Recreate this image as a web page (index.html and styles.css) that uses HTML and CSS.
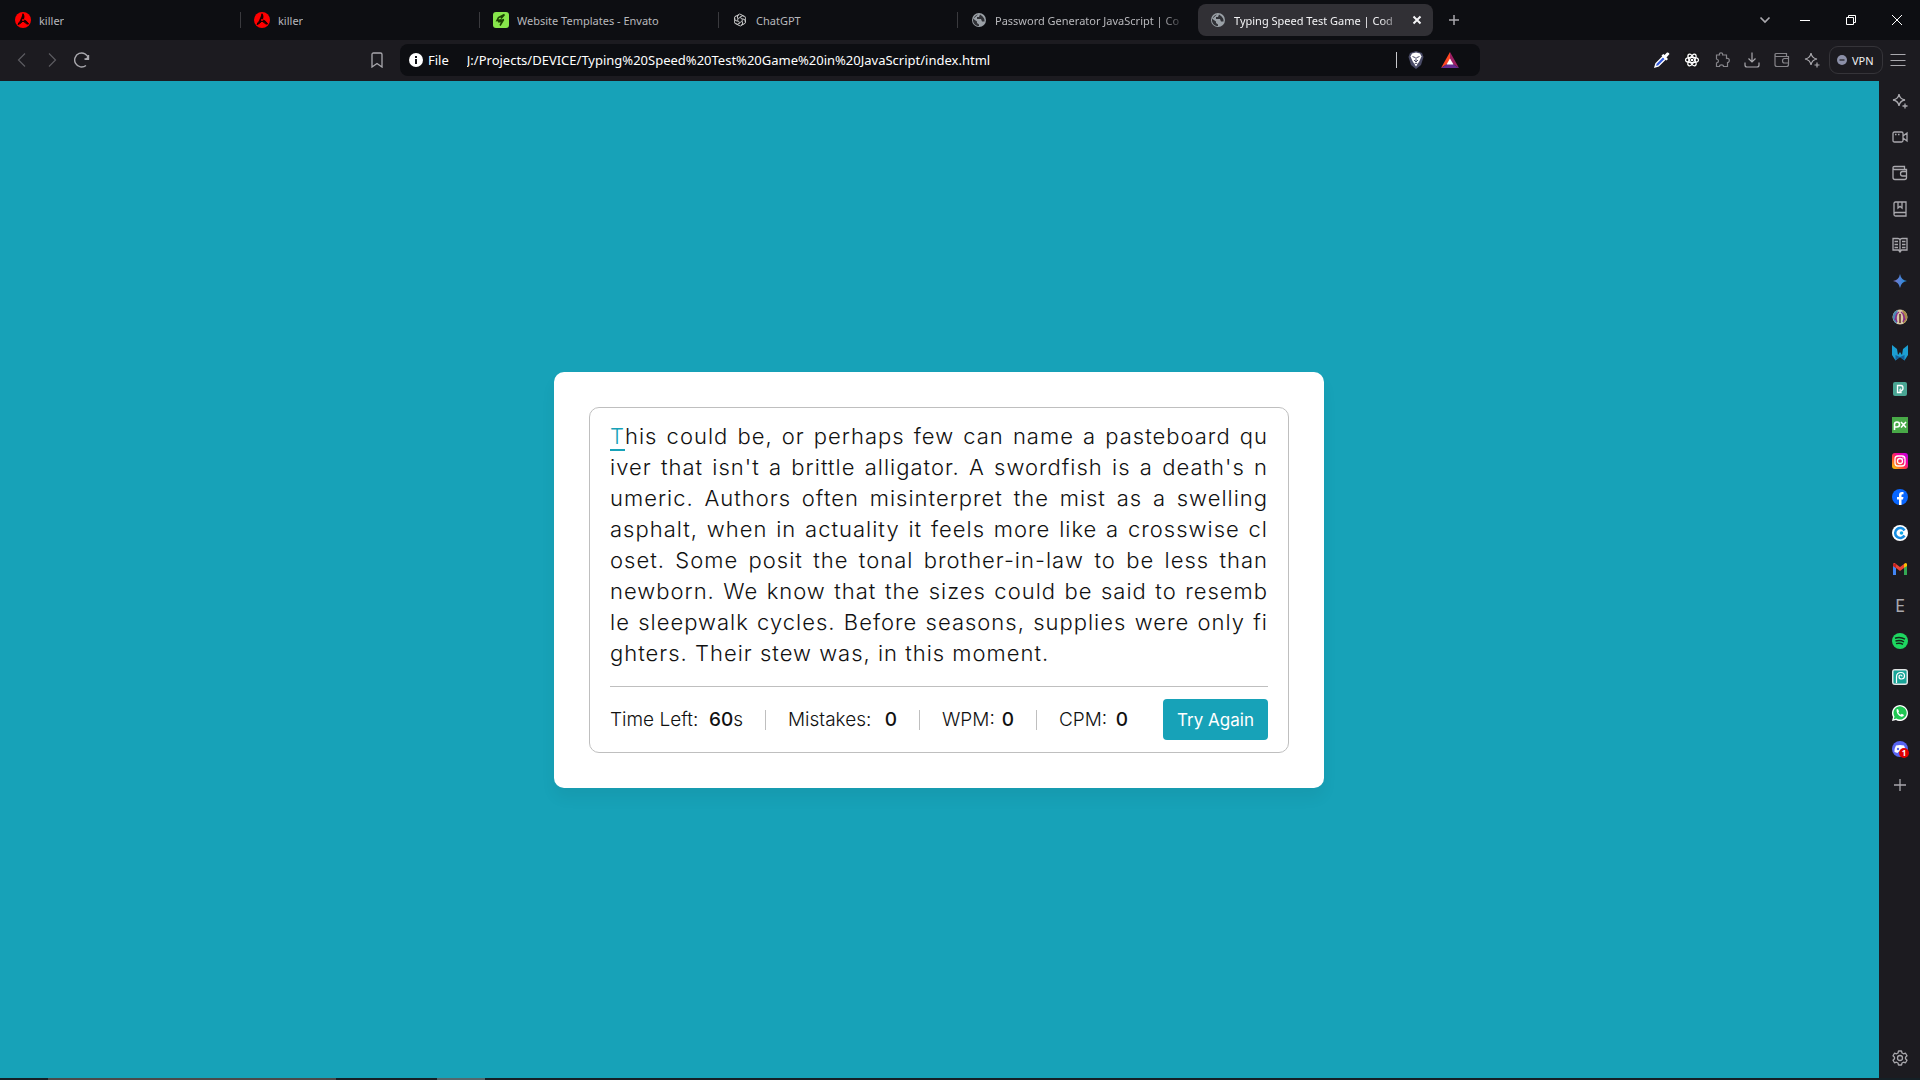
FILE: index.html
```html
<!DOCTYPE html>
<html lang="en">
<head>
<meta charset="utf-8">
<title>Typing Speed Test Game | CodingNepal</title>
<link rel="stylesheet" href="styles.css">
</head>
<body>
<svg class="defs" aria-hidden="true">
  <symbol id="killer" viewBox="0 0 16 16"><circle cx="8" cy="8" r="8" fill="#f00"/><path d="M8 1.500V7L3.500 12M8 9L12.500 12.500M8 2C9.500 4 9 6 8 8C6 8 4 10 3 12.500C5 12 6.500 10.500 8 9C10 9.500 11.500 11 13.500 12C12.500 9.500 10 8 8 8" fill="#200" stroke="#100" stroke-width="1"/><circle cx="8" cy="8" r="1" fill="#f00"/></symbol>
  <symbol id="globe" viewBox="0 0 16 16"><circle cx="8" cy="8" r="7" fill="#9aa0a6"/><path d="M7 2.500C5 3 3 4.500 2.500 7L6 9.500V11L8 12.500V14C5 14 2.500 12 2 9L2 7M9 2.500L8 5H6V7H10L11 9.500H13.500C14 7 12 4 9 2.500Z" fill="#303136"/></symbol>
  <symbol id="sparkle" viewBox="0 0 16 16"><path d="M7 1C7.600 4.800 9.200 6.400 13 7C9.200 7.600 7.600 9.200 7 13C6.400 9.200 4.800 7.600 1 7C4.800 6.400 6.400 4.800 7 1ZM13 10.500V15.500M10.500 13H15.500"/></symbol>
  <symbol id="wallet" viewBox="0 0 16 16"><path d="M14.500 6V4.500H2.500A1.500 1.500 0 0 1 1 3V2.500Q1 1.500 2.500 1.500H12.500V4.500M1 3V12.500Q1 14.500 3 14.500H12.500Q14.500 14.500 14.500 12.500V6.500H10.500Q8.500 6.500 8.500 8.700Q8.500 11 10.500 11H14.500"/></symbol>
</svg>
<div class="browser">
  <header>
    <div class="tabs">
      <button class="tab"><svg class="ico"><use href="#killer"/></svg><span>killer</span></button><i class="sep"></i>
      <button class="tab"><svg class="ico"><use href="#killer"/></svg><span>killer</span></button><i class="sep"></i>
      <button class="tab"><svg class="ico" viewBox="0 0 16 16"><rect width="16" height="16" rx="3" fill="#87e64b"/><path d="M11.500 2.500L5.500 5.500L4 8.500L8.500 7.800M11 7.500L5 9.800L9.500 9.500L7 13.500M11.500 2.500L8 6.500" fill="none" stroke="#1a4200" stroke-width="1.600"/></svg><span>Website Templates - Envato</span></button><i class="sep"></i>
      <button class="tab"><svg class="ico line light" viewBox="0 0 16 16"><g stroke-width=".9"><path d="M5.500 6.500V3.500Q7.500 .8 10 3L12 4.500"/><path d="M5.500 6.500V3.500Q7.500 .8 10 3L12 4.500" transform="rotate(60 8 8)"/><path d="M5.500 6.500V3.500Q7.500 .8 10 3L12 4.500" transform="rotate(120 8 8)"/><path d="M5.500 6.500V3.500Q7.500 .8 10 3L12 4.500" transform="rotate(180 8 8)"/><path d="M5.500 6.500V3.500Q7.500 .8 10 3L12 4.500" transform="rotate(240 8 8)"/><path d="M5.500 6.500V3.500Q7.500 .8 10 3L12 4.500" transform="rotate(300 8 8)"/><path d="M8 5.500L10.200 6.700V9.300L8 10.500L5.800 9.300V6.700Z"/></g></svg><span>ChatGPT</span></button><i class="sep"></i>
      <button class="tab"><svg class="ico"><use href="#globe"/></svg><span class="fade">Password Generator JavaScript | Co</span></button><i class="sep none"></i>
      <button class="tab active"><svg class="ico"><use href="#globe"/></svg><span class="fade">Typing Speed Test Game | Cod</span><svg class="close line" viewBox="0 0 10 10"><path d="M1.500 1.500L8.500 8.500M8.500 1.500L1.500 8.500"/></svg></button>
      <button class="ib new" aria-label="New tab"><svg class="line" viewBox="0 0 16 16"><path d="M8 3V13M3 8H13" stroke-width="1.500"/></svg></button>
      <div class="window">
        <button class="ib" aria-label="Search tabs"><svg class="line" viewBox="0 0 16 16"><path d="M3.500 5.500L8 10L12.500 5.500" stroke-width="1.700"/></svg></button>
        <button class="ib white" aria-label="Minimize"><svg class="line" viewBox="0 0 16 16"><path d="M3 8.500H13"/></svg></button>
        <button class="ib white" aria-label="Restore"><svg class="line" viewBox="0 0 16 16"><path d="M3.500 5.500H10.500V12.500H3.500ZM5.500 5.500V3.500H12.500V10.500H10.500"/></svg></button>
        <button class="ib white" aria-label="Close"><svg class="line" viewBox="0 0 16 16"><path d="M3 3L13 13M13 3L3 13"/></svg></button>
      </div>
    </div>
    <div class="toolbar">
      <nav class="nav">
        <button class="ib dim" aria-label="Back"><svg class="line" viewBox="0 0 16 16"><path d="M11 1.500L4.500 8L11 14.500"/></svg></button>
        <button class="ib dim" aria-label="Forward"><svg class="line" viewBox="0 0 16 16"><path d="M5 1.500L11.500 8L5 14.500"/></svg></button>
        <button class="ib" aria-label="Reload"><svg class="line" viewBox="0 0 16 16"><path d="M12 13.500A7 7 0 1 1 14.500 6.500M14.500 3V7H10.500" stroke-width="1.400"/><path d="M15 3V8H10.500Z" fill="currentColor" stroke="none"/></svg></button>
      </nav>
      <button class="ib mark" aria-label="Bookmark"><svg class="line" viewBox="0 0 16 16"><path d="M3 2.500Q3 1 4.500 1H11.500Q13 1 13 2.500V15L8 11.500L3 15Z" stroke-width="1.300"/></svg></button>
      <div class="address">
        <svg class="info" viewBox="0 0 14 14"><circle cx="7" cy="7" r="7" fill="#fff"/><path d="M7 3V5M7 6V11" stroke="#111217" stroke-width="2"/></svg>
        <label for="url">File</label>
        <input id="url" value="J:/Projects/DEVICE/Typing%20Speed%20Test%20Game%20in%20JavaScript/index.html">
        <i class="bar"></i>
        <svg class="lion" viewBox="0 0 16 18"><path d="M8 0L14 2L15.500 6L13 14L8 18L3 14L.5 6L2 2Z" fill="#494b66"/><path d="M4 2.500L8 1.500L12 2.500L13.500 5.500L11.500 10L8 15.500L4.500 10L2.500 5.500Z" fill="#fff"/><path d="M4.500 5.500L7 6.500M11.500 5.500L9 6.500M8 6V10M6 9L8 11L10 9M6.500 13L8 12L9.500 13" fill="none" stroke="#494b66"/></svg>
        <svg class="bat" viewBox="0 0 18 16"><path d="M9 0L0 16L9 10Z" fill="#ff4724"/><path d="M9 0L18 16L9 10Z" fill="#9e1f63"/><path d="M0 16H18L9 10Z" fill="#662d91"/><path d="M9 6.500L5.500 12.500H12.500Z" fill="#fff"/></svg>
      </div>
      <div class="tools">
        <button class="ib" aria-label="Color picker"><svg viewBox="0 0 16 16"><path d="M1 15L2 11.500L9 4.500L11.500 7L4.500 14Z" fill="#3157d8" stroke="#fff" stroke-width="1.400"/><path d="M8 3L9.500 2L10.500 3L13 .5Q15 0 15.500 2L12.500 5.500L14 7L12.500 8.500L7.500 3.500Z" fill="#fff"/></svg></button>
        <button class="ib white" aria-label="React tools"><svg class="line" viewBox="0 0 16 16"><rect width="16" height="16" fill="#18181a" stroke="none"/><ellipse cx="8" cy="8" rx="6.500" ry="2.600"/><ellipse cx="8" cy="8" rx="6.500" ry="2.600" transform="rotate(60 8 8)"/><ellipse cx="8" cy="8" rx="6.500" ry="2.600" transform="rotate(120 8 8)"/><circle cx="8" cy="8" r=".7"/></svg></button>
        <button class="ib dull" aria-label="Extensions"><svg class="line" viewBox="0 0 16 16"><path d="M2.500 3H5.500Q5 .8 7 .8Q9 .8 8.600 3H12.500V6.500Q15.300 6 15.300 8.300Q15.300 10.500 13.500 10.500V14.500H9.500Q9.500 12.800 7.500 12.800Q5.500 12.800 5.500 14.500H2.500V11Q4.500 10.500 4.500 9Q4.500 7.500 2.500 7Z"/></svg></button>
        <button class="ib" aria-label="Downloads"><svg class="line" viewBox="0 0 16 16"><path d="M8 .5V9.500M4.500 6.500L8 10L11.500 6.500M1 10.500V13Q1 15 3 15H13Q15 15 15 13V10.500"/></svg></button>
        <button class="ib dull" aria-label="Wallet"><svg class="line"><use href="#wallet"/></svg></button>
        <button class="ib" aria-label="Leo AI"><svg class="line"><use href="#sparkle"/></svg></button>
      </div>
      <button class="vpn"><svg viewBox="0 0 10 10"><circle cx="5" cy="5" r="5" fill="#8c90a8"/><path d="M2.500 5H7.500" stroke="#24242c" stroke-width="1.300"/></svg>VPN</button>
      <button class="ib menu" aria-label="Menu"><svg class="line" viewBox="0 0 16 16"><path d="M.5 2.500H15.500M.5 8.500H15.500M.5 13.500H15.500"/></svg></button>
    </div>
  </header>
  <div class="body">
    <main>
      <section class="card">
        <div class="box">
          <p class="typing">
            <span class="row"><span class="current">T</span>his could be, or perhaps few can name a pasteboard qu</span>
            <span class="row">iver that isn't a brittle alligator. A swordfish is a death's n</span>
            <span class="row">umeric. Authors often misinterpret the mist as a swelling</span>
            <span class="row">asphalt, when in actuality it feels more like a crosswise cl</span>
            <span class="row">oset. Some posit the tonal brother-in-law to be less than</span>
            <span class="row">newborn. We know that the sizes could be said to resemb</span>
            <span class="row">le sleepwalk cycles. Before seasons, supplies were only fi</span>
            <span class="row last">ghters. Their stew was, in this moment.</span>
          </p>
          <div class="content">
            <ul class="results">
              <li><span>Time Left:</span><span><b>60</b>s</span></li>
              <li><span>Mistakes:</span><b>0</b></li>
              <li><span>WPM:</span><b>0</b></li>
              <li><span>CPM:</span><b>0</b></li>
            </ul>
            <button class="again">Try Again</button>
          </div>
        </div>
      </section>
    </main>
    <aside>
      <button class="ib" aria-label="Leo AI"><svg class="line"><use href="#sparkle"/></svg></button>
      <button class="ib" aria-label="Talk"><svg class="line" viewBox="0 0 16 16"><path d="M2.500 3H9.500Q11 3 11 4.500V11.500Q11 13 9.500 13H2.500Q1 13 1 11.500V4.500Q1 3 2.500 3ZM11 7L15 4V12L11 9M3 5.500H4.500M6 5.500H7.500"/></svg></button>
      <button class="ib" aria-label="Wallet"><svg class="line"><use href="#wallet"/></svg></button>
      <button class="ib" aria-label="Bookmarks"><svg class="line" viewBox="0 0 16 16"><path d="M14 11.500V1H3.500Q2 1 2 2.500V13.500Q2 15 3.500 15H14V11.500H3.500Q2 11.500 2 13M6 1V7L8 5.300L10 7V1"/></svg></button>
      <button class="ib" aria-label="Reading list"><svg class="line" viewBox="0 0 16 16"><path d="M8 3Q7.500 1.500 6 1.500H1V13H6.500L8 15L9.500 13H15V1.500H10Q8.500 1.500 8 3V15M2.500 4.500H6M2.500 7.500H6M2.500 10.500H6M10 4.500H13.500M10 7.500H13.500M10 10.500H13.500"/></svg></button>
      <a href="#gemini" aria-label="Gemini"><svg viewBox="0 0 16 16"><defs><linearGradient id="gem"><stop stop-color="#8377c8"/><stop offset=".5" stop-color="#4e83d8"/><stop offset="1" stop-color="#168ed8"/></linearGradient></defs><path d="M8 1Q9 7 15 8Q9 9 8 15Q7 9 1 8Q7 7 8 1Z" fill="url(#gem)"/></svg></a>
      <a href="#library" aria-label="Library"><svg viewBox="0 0 16 16"><circle cx="8" cy="8" r="7.500" fill="#d7c9a8"/><path d="M1 6A7.500 7.500 0 0 1 6 1Q4 6 5 15Q0 12 1 6" fill="#4e88b4"/><path d="M15 6A7.500 7.500 0 0 0 10 1Q12 6 11 15Q16 12 15 6" fill="#a98b4a"/><path d="M5 13Q2 6 7 3M11 13Q14 6 9 3M3 11L5 5M13 11L11 5" fill="none" stroke="#8b268b" stroke-width="1.300"/><path d="M7 5H9V14H7Z" fill="#7d5348"/></svg></a>
      <a href="#wings" aria-label="Wings"><svg viewBox="0 0 16 16"><path d="M0 0L5 4L6 10L8 7L10 10L11 4L16 0V10L12.500 15.500L8 12L3.500 15.500L0 10Z" fill="#1c9ed2"/><path d="M3.500 10L8 12L12.500 10V15.500L8 12L3.500 15.500Z" fill="#155f9b"/></svg></a>
      <a href="#pexels" aria-label="Pexels"><svg viewBox="0 0 16 16"><rect x="1" y="1" width="14" height="14" rx="2" fill="#4aa694"/><path d="M5.500 4.500H9Q11 4.500 11 7Q11 9.500 9 9.500V11.500H5.500Z" fill="none" stroke="#fff" stroke-width="1.300"/><path d="M8 11V8H9" fill="none" stroke="#fff"/></svg></a>
      <a href="#pixabay" aria-label="Pixabay"><svg viewBox="0 0 16 16"><rect width="16" height="16" fill="#48a947"/><path d="M2.500 13V7.500A2.500 2.500 0 1 1 5 10H2.500M9 5L14 10.500M14 5L9 10.500" fill="none" stroke="#fff" stroke-width="1.600"/></svg></a>
      <a href="#instagram" aria-label="Instagram"><svg viewBox="0 0 16 16"><defs><linearGradient id="ig" x1="0" y1="1" x2="1" y2="0"><stop stop-color="#ffd600"/><stop offset=".4" stop-color="#ff423c"/><stop offset=".65" stop-color="#f600a0"/><stop offset="1" stop-color="#b900ed"/></linearGradient></defs><rect width="16" height="16" rx="3" fill="url(#ig)"/><rect x="3" y="3" width="10" height="10" rx="3" fill="none" stroke="#fff" stroke-width="1.300"/><circle cx="8" cy="8" r="2.500" fill="none" stroke="#fff" stroke-width="1.300"/><circle cx="11" cy="5" r=".7" fill="#fff"/></svg></a>
      <a href="#facebook" aria-label="Facebook"><svg viewBox="0 0 16 16"><circle cx="8" cy="8" r="8" fill="#0866ff"/><path d="M7 16V10.500H5V8H7V6Q7 3 10 3H11.500V5.300H10.500Q9.500 5.300 9.500 6.500V8H11.500L11 10.500H9.500V16Z" fill="#fff"/></svg></a>
      <a href="#coin" aria-label="Coin"><svg viewBox="0 0 16 16"><circle cx="8" cy="8" r="8" fill="#fff"/><path d="M12.500 5.500A5 5 0 1 0 12.500 10.500" fill="none" stroke="#168de2" stroke-width="2.600"/><circle cx="9.500" cy="8" r="1.800" fill="#11a8e8"/></svg></a>
      <a href="#gmail" aria-label="Gmail"><svg viewBox="0 0 16 16"><path d="M1 4V14H4V7" fill="#4285f4"/><path d="M12 7V14H15V4" fill="#34a853"/><path d="M1 3Q2 1 4 3L8 6L12 3V7L8 10L4 7L1 5Z" fill="#ea4335"/><path d="M12 3Q14 1 15 3V5L12 7Z" fill="#fbbc04"/><path d="M1 3L4 3V7L1 5Z" fill="#c5221f"/></svg></a>
      <a href="#e" class="letter">E</a>
      <a href="#spotify" aria-label="Spotify"><svg viewBox="0 0 16 16"><circle cx="8" cy="8" r="8" fill="#1ed760"/><path d="M3 5.300Q8 3.500 13 6.200M3.500 8Q8 6.600 12 8.800M4 10.600Q8 9.500 11 11.300" fill="none" stroke="#132b1b" stroke-width="1.500"/></svg></a>
      <a href="#photopea" aria-label="Photopea"><svg viewBox="0 0 16 16"><rect width="16" height="16" rx="3" fill="#e1e5e4"/><rect x="1.500" y="1.500" width="13" height="13" rx="1" fill="#18a497"/><path d="M4.500 14V8Q4.500 3.500 9 3.500Q12.500 3.500 12.500 7Q12.500 10 9.500 10Q7 10 7 8Q7 6 8.700 6Q10 6 10 7.500" fill="none" stroke="#fff" stroke-width="1.200"/></svg></a>
      <a href="#whatsapp" aria-label="WhatsApp"><svg viewBox="0 0 16 16"><path d="M0 16L1 12A8 8 0 1 1 4 15Z" fill="#fff"/><path d="M1.800 14.200L2.500 11.500A6.600 6.600 0 1 1 4.500 13.500Z" fill="#20c652"/><path d="M4.500 4.500L6 4L7 6.500L6.300 7.400Q7.200 9 8.800 9.700L9.800 8.800L12 10Q11.500 12 9.500 11.800Q4.500 10.500 4.500 4.500Z" fill="#fff"/></svg></a>
      <a href="#discord" aria-label="Discord, 1 new"><svg viewBox="0 0 16 16"><circle cx="8" cy="8" r="8" fill="#5865f2"/><path d="M4 4.500Q8 3.500 12 4.500Q14 8 13.500 11L10.500 12L9.500 10.800H6.500L5.500 12L2.500 11Q2 8 4 4.500Z" fill="#fff"/><circle cx="6" cy="8" r="1.200" fill="#5865f2"/></svg><span class="badge">1</span></a>
      <button class="ib" aria-label="Add"><svg class="line" viewBox="0 0 16 16"><path d="M8 2V14M2 8H14"/></svg></button>
      <button class="ib gear" aria-label="Settings"><svg class="line" viewBox="0 0 16 16"><path d="M6.500 1H9.500L10 3L11.500 3.800L13.500 3.200L15 5.800L13.500 7.200V8.800L15 10.200L13.500 12.800L11.500 12.200L10 13L9.500 15H6.500L6 13L4.500 12.200L2.500 12.800L1 10.200L2.500 8.800V7.200L1 5.800L2.500 3.200L4.500 3.800L6 3Z" stroke-linejoin="round"/><circle cx="8" cy="8" r="2.500"/></svg></button>
    </aside>
  </div>
  <footer><i class="task"></i><i class="task small"></i></footer>
</div>
</body>
</html>
```
FILE: styles.css
```css
* { box-sizing: border-box; }
body { margin: 0; font-family: "Noto Sans", "Open Sans", sans-serif; background: #1c1b20; }
button { font: inherit; color: inherit; background: none; border: 0; padding: 0; }
.defs { position: absolute; width: 0; height: 0; }
svg { display: block; flex: none; width: 16px; height: 16px; }
.line { fill: none; stroke: currentColor; }
.browser { display: flex; flex-direction: column; min-height: 100vh; }

/* tab strip */
.tabs { display: flex; align-items: center; height: 40px; padding-left: 3px; background: #0d0e12; color: #b8b8bc; font-size: 11px; }
.tab { display: flex; align-items: center; gap: 8px; flex: 0 1 235px; min-width: 0; height: 32px; padding: 0 8px 0 12px; border-radius: 8px; text-align: left; white-space: nowrap; }
.tab span { overflow: hidden; }
.tab .light { color: #d0d0d0; }
.tab.active { background: #313035; color: #f4f4f6; }
.fade { flex: 1; -webkit-mask-image: linear-gradient(to right, #000 calc(100% - 24px), transparent); mask-image: linear-gradient(to right, #000 calc(100% - 24px), transparent); }
.close { width: 10px; height: 10px; stroke-width: 2; margin-right: 3px; }
.sep { width: 1px; height: 16px; margin: 0 1px 0 2px; background: #3a3a3e; }
.sep.none { background: transparent; }
.ib { display: flex; align-items: center; justify-content: center; flex: none; width: 30px; height: 30px; color: #a9a8ad; }
.new { margin-left: 6px; }
.window { display: flex; gap: 16px; margin-left: auto; padding-right: 8px; }
.window .ib:first-child { margin-right: -6px; }
.white { color: #fff; }
.dim { color: #5c5b60; }
.dull { color: #858489; }

/* toolbar */
.toolbar { display: flex; align-items: center; height: 41px; padding: 0 7px 1px; background: #1c1b20; }
.toolbar .line { stroke-width: 1.2px; }
.nav { display: flex; flex: 1; margin-right: 8px; }
.mark { margin-right: 8px; }
.address { display: flex; align-items: center; flex: 0 1 1080px; height: 32px; padding: 0 21px 0 9px; border-radius: 8px; background: #0d0e12; color: #fff; font-size: 13px; }
.info { width: 14px; height: 14px; margin-right: 5px; }
.address input { flex: 1; min-width: 0; margin-left: 18px; padding: 0; border: 0; outline: 0; background: none; color: #fff; font: inherit; }
.bar { width: 1px; height: 16px; background: #c8c8cc; }
.lion { height: 18px; margin: 0 17px 0 11px; }
.bat { width: 18px; }
.tools { display: flex; flex: 1; justify-content: flex-end; margin-right: 2px; }
.vpn { display: flex; align-items: center; gap: 5px; width: 54px; height: 28px; padding-left: 7px; border: 1px solid #353439; border-radius: 9px; color: #f0f0f2; font-size: 11px; }
.vpn svg { width: 10px; height: 10px; }

/* page */
.body { display: flex; flex: 1; }
main { flex: 1; display: grid; place-items: center; padding: 17px 17px 16px 16px; background: #17a2b8; }
.card { width: 770px; max-width: 100%; padding: 35px; background: #fff; border-radius: 10px; box-shadow: 0 10px 15px rgba(0, 0, 0, .05); font-family: Inter, sans-serif; font-weight: 300; color: #111; }
.box { padding: 13px 20px 12px; border: 1px solid #bfbfbf; border-radius: 10px; }
.typing { margin: 0 0 17px; font-size: 22px; line-height: 31px; letter-spacing: 1px; }
.row { display: block; white-space: nowrap; text-align: justify; text-align-last: justify; }
.row.last { text-align-last: left; }
.current { color: #17a2b8; border-bottom: 2px solid #17a2b8; }
.content { display: flex; align-items: center; justify-content: space-between; padding-top: 12px; border-top: 1px solid #bfbfbf; }
.results { display: grid; grid-template-columns: 155px 154px 117px 92px; margin: 0; padding: 0; list-style: none; font-size: 19px; line-height: 20px; }
.results li { display: flex; justify-content: space-between; padding: 0 22px 0 22px; border-left: 1px solid #bfbfbf; }
.results li:first-child { padding-left: 0; border: 0; }
.results li:last-child { padding-right: 0; }
.results b { font-weight: 500; }
.again { width: 105px; height: 41px; border-radius: 4px; background: #17a2b8; color: #fff; font-size: 17px; font-weight: 400; }

/* sidebar */
aside { display: flex; flex-direction: column; align-items: center; width: 41px; padding: 2px 0 2px 1px; background: #1c1b20; }
aside .line { stroke-width: 1.3px; }
aside .ib, aside a { display: flex; align-items: center; justify-content: center; position: relative; width: 36px; height: 36px; text-decoration: none; }
aside .letter { color: #a9a8ad; font-size: 18px; }
.badge { position: absolute; right: 9px; bottom: 9px; width: 10px; height: 10px; border-radius: 5px; background: #e00000; color: #fff; font-size: 8px; font-weight: 700; line-height: 10px; text-align: center; }
aside .gear { margin-top: auto; }

/* taskbar edge */
footer { display: flex; height: 2px; padding-left: 48px; background: #152026; }
.task { width: 288px; background: #4b4a4a; }
.task.small { width: 48px; margin-left: 101px; background: #53686d; }
```
